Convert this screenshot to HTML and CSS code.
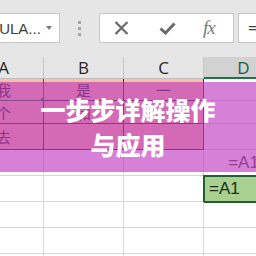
FILE: index.html
```html
<!DOCTYPE html>
<html lang="zh-CN">
<head>
    <meta charset="UTF-8">
    <meta name="viewport" content="width=device-width, initial-scale=1.0">
    <title>一步步详解操作与应用</title>
    <link rel="stylesheet" href="styles.css">
</head>
<body>

    <!-- Spreadsheet window -->
    <div class="sheet-view">

        <!-- Name box + formula bar -->
        <div class="formula-bar">
            <div class="name-box">
                <span class="name-text">FORMULA...</span>
                <span class="caret"></span>
            </div>
            <div class="grip"><i></i><i></i><i></i></div>
            <div class="fx-box">
                <svg class="icon-x" width="15" height="14" viewBox="0 0 15 14">
                    <path d="M1.5 1 L13.5 13 M13.5 1 L1.5 13" stroke="#6a6a6a" stroke-width="2.2" fill="none"/>
                </svg>
                <svg class="icon-check" width="17" height="13" viewBox="0 0 17 13">
                    <path d="M1.5 6.5 L6.5 11 L15.5 1.5" stroke="#6a6a6a" stroke-width="3" fill="none"/>
                </svg>
                <span class="fx">fx</span>
            </div>
            <div class="input-box">=</div>
        </div>

        <!-- Cells -->
        <div class="grid">
            <div class="col-head">A</div>
            <div class="col-head">B</div>
            <div class="col-head">C</div>
            <div class="col-head active">D</div>

            <div class="cell filled sel-cell">我<span class="selection"></span></div>
            <div class="cell filled">是</div>
            <div class="cell filled">一</div>
            <div class="cell"></div>

            <div class="cell filled">个</div>
            <div class="cell filled">和</div>
            <div class="cell filled"></div>
            <div class="cell"></div>

            <div class="cell filled">去</div>
            <div class="cell filled"></div>
            <div class="cell filled"></div>
            <div class="cell"></div>

            <div class="cell"></div>
            <div class="cell"></div>
            <div class="cell"></div>
            <div class="cell formula">=A1</div>

            <div class="cell"></div>
            <div class="cell"></div>
            <div class="cell"></div>
            <div class="cell active-cell">=A1</div>

            <div class="cell"></div>
            <div class="cell"></div>
            <div class="cell"></div>
            <div class="cell"></div>

            <div class="cell"></div>
            <div class="cell"></div>
            <div class="cell"></div>
            <div class="cell"></div>

            <div class="cell"></div>
            <div class="cell"></div>
            <div class="cell"></div>
            <div class="cell"></div>
        </div>

        <!-- Title banner over the sheet -->
        <div class="banner">
            <h1 class="banner-title">一步步详解操作<br>与应用</h1>
        </div>
    </div>

</body>
</html>
```

FILE: styles.css
```css
/* General */
body {
    margin: 0;
    background: #ffffff;
    font-family: 'Open Sans', 'Liberation Sans', 'Noto Sans CJK SC', sans-serif;
}

.sheet-view {
    position: relative;
    width: 256px;
    height: 256px;
    overflow: hidden;
}

/* Formula bar row */
.formula-bar {
    display: flex;
    align-items: flex-start;
    box-sizing: border-box;
    height: 57px;
    padding-top: 13px;
    background: #e6e6e6;
}

.name-box {
    flex: none;
    display: flex;
    align-items: center;
    justify-content: space-between;
    box-sizing: border-box;
    width: 112px;
    height: 30px;
    margin-left: -52px;
    padding: 0 7px 0 6px;
    background: #ffffff;
    border: 1px solid #c8c8c8;
    font-family: 'Liberation Sans', sans-serif;
    font-size: 15px;
    color: #404040;
}

.caret {
    width: 0;
    height: 0;
    border-left: 3px solid transparent;
    border-right: 3px solid transparent;
    border-top: 4px solid #7a7a7a;
}

.grip {
    flex: none;
    width: 39px;
    display: flex;
    flex-direction: column;
    align-items: center;
    gap: 3px;
    padding-top: 8px;
}

.grip i {
    width: 3px;
    height: 3px;
    background: #a4a4a4;
}

.fx-box {
    flex: none;
    display: flex;
    align-items: center;
    box-sizing: border-box;
    width: 135px;
    height: 30px;
    padding-left: 14px;
    background: #ffffff;
    border: 1px solid #c8c8c8;
}

.icon-check {
    margin-left: 30px;
}

.fx {
    margin-left: 27px;
    font-family: 'Liberation Serif', serif;
    font-style: italic;
    font-size: 19px;
    color: #7a7a7a;
    letter-spacing: -1px;
}

.input-box {
    flex: 1;
    box-sizing: border-box;
    height: 30px;
    margin-left: 4px;
    padding-left: 9px;
    background: #ffffff;
    border: 1px solid #c8c8c8;
    font-size: 16px;
    line-height: 28px;
    color: #404040;
}

/* Grid */
.grid {
    display: grid;
    grid-template-columns: repeat(4, 80px);
    grid-template-rows: 22px 22px 23px 26px 26px 26px 26px 26px 26px;
    margin-left: -36px;
}

.col-head {
    display: flex;
    align-items: center;
    justify-content: center;
    box-sizing: border-box;
    background: #e6e6e6;
    border-right: 1px solid #c6c6c6;
    border-bottom: 1px solid #bdbdbd;
    font-size: 17px;
    color: #262626;
}

.col-head.active {
    background: #d2d2d2;
    border-bottom: 2px solid #217346;
    color: #1f5c40;
}

.cell {
    position: relative;
    display: flex;
    align-items: center;
    justify-content: center;
    box-sizing: border-box;
    border-right: 1px solid #d6d6d6;
    border-bottom: 1px solid #d6d6d6;
    font-family: 'Noto Sans CJK SC', sans-serif;
    font-size: 15px;
    color: #2a2a2a;
}

.cell.filled {
    background: #f6c3a2;
    border-right-color: #333333;
    border-bottom-color: #333333;
}

.cell.formula {
    font-family: 'Liberation Sans', sans-serif;
    font-size: 17px;
    color: #444444;
}

.cell.active-cell {
    justify-content: flex-start;
    padding-left: 5px;
    background: #a9d08e;
    outline: 2px solid #245c33;
    outline-offset: -1px;
    font-family: 'Liberation Sans', sans-serif;
    font-size: 17px;
    color: #1c2e1c;
}

/* Copy selection around A1 */
.selection {
    position: absolute;
    top: 0;
    right: -2px;
    bottom: -2px;
    left: 0;
    border-right: 2px solid #217346;
    border-bottom: 2px solid #217346;
}

.selection::after {
    content: "";
    position: absolute;
    right: -4px;
    bottom: -4px;
    width: 6px;
    height: 6px;
    background: #217346;
}

/* Banner */
.banner {
    position: absolute;
    top: 82px;
    left: 0;
    right: 0;
    height: 90px;
    display: flex;
    align-items: center;
    justify-content: center;
    background: rgba(192, 56, 192, 0.64);
}

.banner-title {
    margin: 0;
    font-family: 'Noto Sans CJK SC', sans-serif;
    font-weight: 900;
    font-size: 25px;
    line-height: 35px;
    text-align: center;
    color: #ffffff;
}
```
